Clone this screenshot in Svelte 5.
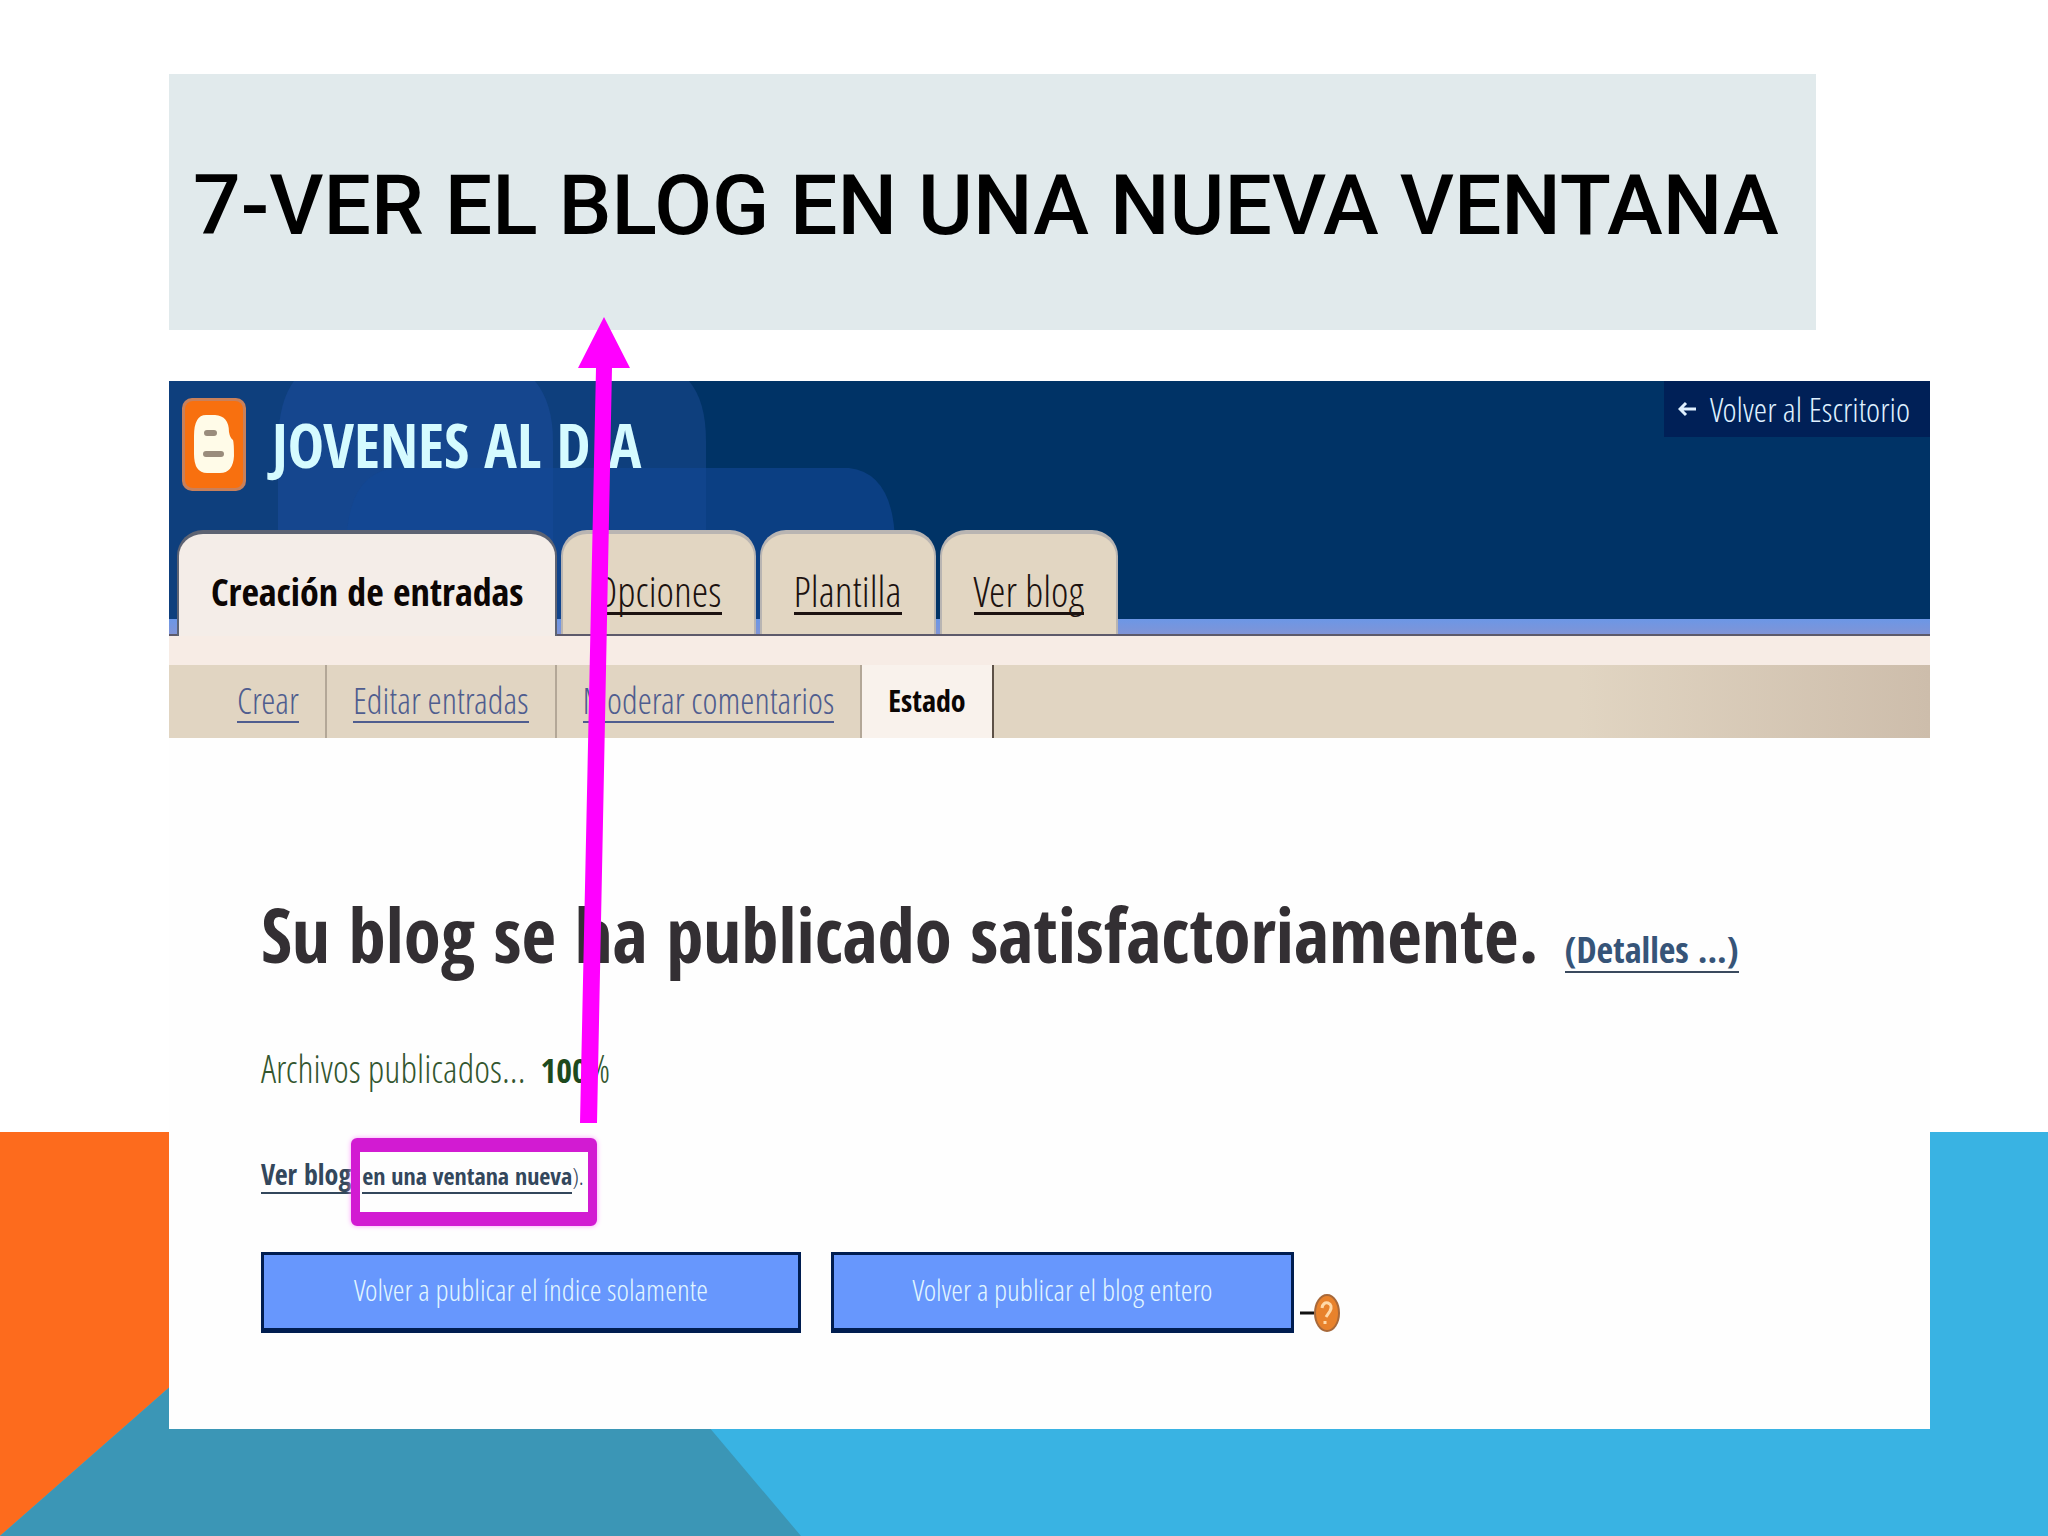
<script lang="ts">
  const tabs = ["Opciones", "Plantilla", "Ver blog"]
  const links = ["Crear", "Editar entradas", "Moderar comentarios"]
</script>

<main class="slide">
  <svg class="backdrop" viewBox="0 0 2048 404" preserveAspectRatio="none" aria-hidden="true">
    <rect width="2048" height="404" fill="#39b3e3" />
    <path d="M0 0H460L0 404Z" fill="#fd6b1d" />
    <path d="M0 404L460 0L801 404Z" fill="#3b96b6" />
  </svg>

  <div class="content">
    <h1 class="title">7-VER EL BLOG EN UNA NUEVA VENTANA</h1>

    <section class="window">
      <header class="head">
        <svg class="bubbles" width="740" height="253" viewBox="0 0 740 253" aria-hidden="true">
          <path d="M0 0H520Q537 20 537 60V253H0Z" fill="#0e3f7d" />
          <path d="M109 253V60Q110 20 125 0H366Q384 22 384 60V253Z" fill="#15468e" />
          <path d="M178 253V150Q184 88 230 87H680Q724 92 726 160V253Z" fill="#134796" opacity="0.6" />
        </svg>
        <div class="head-inner">
          <div class="brand-row">
            <svg class="logo" width="64" height="93" viewBox="0 0 64 93" role="img" aria-label="Blogger">
              <rect width="64" height="93" rx="10" fill="#c9805a" />
              <rect x="3" y="3" width="58" height="87" rx="8" fill="#f8700f" />
              <path d="M12 38Q12 17 24 17H33Q47 18 47 34Q48 40 51 42Q52 45 52 58Q51 75 38 75H25Q12 75 12 56Z" fill="#fffbe8" />
              <path d="M25 35H32M24 56H39" stroke="#9a8c7c" stroke-width="6" stroke-linecap="round" />
            </svg>
            <h2 class="blog-name">JOVENES AL DIA</h2>
            <a class="back" href="#escritorio">
              <svg width="18" height="16" viewBox="0 0 18 16" aria-hidden="true">
                <path d="M18 8H2M8 2L2 8L8 14" fill="none" stroke="#dff0ff" stroke-width="3" />
              </svg>
              Volver al Escritorio
            </a>
          </div>
          <nav class="tabs">
            <a class="tab current" href="#entradas">Creación de entradas</a>
            {#each tabs as tab}
              <a class="tab" href="#{tab}"><span>{tab}</span></a>
            {/each}
          </nav>
        </div>
      </header>

      <nav class="subnav">
        {#each links as link}
          <a class="sub" href="#{link}"><span>{link}</span></a>
        {/each}
        <a class="sub current" href="#estado">Estado</a>
      </nav>

      <div class="body">
        <div class="headline">
          <h3>Su blog se ha publicado satisfactoriamente.</h3>
          <a href="#detalles">(Detalles ...)</a>
        </div>
        <p class="progress">Archivos publicados... <b>100</b>%</p>
        <p class="view">
          <a class="view-link" href="#blog">Ver blog</a>
          <span class="marked"><a href="#ventana">en una ventana nueva</a>).</span>
        </p>
        <div class="actions">
          <button class="wide">Volver a publicar el índice solamente</button>
          <button>Volver a publicar el blog entero</button>
          <svg class="help" width="42" height="40" viewBox="0 0 42 40" role="img" aria-label="Ayuda">
            <path d="M0 20H14" stroke="#111" stroke-width="3" />
            <ellipse cx="27" cy="20" rx="12" ry="18" fill="#e8822c" stroke="#a8693a" stroke-width="2" />
            <path d="M22 15Q23 9 28 10Q33 12 30 18L26 24M25 28V31" fill="none" stroke="#ffd9a8" stroke-width="3" />
          </svg>
        </div>
      </div>
    </section>

    <svg class="arrow" width="52" height="806" viewBox="0 0 52 806" aria-hidden="true">
      <path d="M26 0L52 51H34L19 806H2L18 51H0Z" fill="#ff00ff" />
    </svg>
  </div>
</main>

<style>
  :global(body) {
    margin: 0;
    background: #fff;
  }
  .slide {
    --bold: "Open Sans Condensed", "Roboto Condensed", sans-serif;
    --light: "Open Sans Condensed Light", "Roboto Condensed", sans-serif;
    display: grid;
    grid-template-columns: minmax(0, 1fr);
    min-height: 100vh;
    font-family: var(--light);
  }
  .backdrop {
    grid-area: 1 / 1;
    align-self: end;
    width: 100%;
    height: 404px;
  }
  .content {
    grid-area: 1 / 1;
    position: relative;
    display: flex;
    flex-direction: column;
    gap: 51px;
    box-sizing: border-box;
    padding: 74px 118px 107px 169px;
  }
  .title {
    display: flex;
    align-items: center;
    box-sizing: border-box;
    height: 256px;
    margin: 0 114px 0 0;
    padding: 8px 24px 0;
    background: #e1eaec;
    color: #000;
    font: 500 84px/100px Roboto, sans-serif;
    white-space: nowrap;
  }
  .window {
    flex: 1;
    background: #fefefe;
  }
  .head {
    display: grid;
    background: #003366;
    border-bottom: 2px solid #5d5a6a;
  }
  .bubbles {
    grid-area: 1 / 1;
    align-self: end;
  }
  .head-inner {
    grid-area: 1 / 1;
    background: linear-gradient(#6c97e6, #8094d6) bottom / 100% 15px no-repeat;
  }
  .brand-row {
    display: flex;
    align-items: flex-start;
    height: 149px;
  }
  .logo {
    margin: 17px 26px 0 13px;
  }
  .blog-name {
    flex: 1;
    margin: 24px 0 0;
    color: #d5fbff;
    font-family: var(--bold);
    font-size: 61px;
    line-height: 80px;
  }
  .back {
    display: flex;
    align-items: center;
    gap: 14px;
    padding: 8px 20px 8px 14px;
    background: #002057;
    color: #dff0ff;
    font-size: 34px;
    line-height: 40px;
    text-decoration: none;
  }
  .tabs {
    display: flex;
    gap: 4px;
    height: 104px;
    padding-left: 8px;
  }
  .tab {
    box-sizing: border-box;
    padding: 36px 32px 0;
    border: solid #b9b5b2;
    border-width: 4px 2px 0;
    border-radius: 26px 26px 0 0;
    background: #e2d6c2;
    color: #1c1210;
    font-size: 42px;
    line-height: 42px;
    text-decoration: none;
  }
  .tab span,
  .sub span {
    display: block;
    border-bottom: 3px solid;
  }
  .tab.current {
    margin-bottom: -2px;
    border-color: #5d6373;
    background: #f4ede8;
    color: #0c0604;
    font-family: var(--bold);
    font-size: 38px;
    font-weight: 700;
  }
  .subnav {
    display: flex;
    height: 73px;
    padding-left: 42px;
    border-top: 29px solid #f7ece5;
    background: linear-gradient(90deg, #e1d5c2 80%, #cdbdab);
  }
  .sub {
    padding: 16px 26px 0;
    border-right: 2px solid #b3a797;
    color: #4f5d8f;
    font-size: 36px;
    line-height: 40px;
    text-decoration: none;
  }
  .sub span {
    border-bottom-width: 2px;
  }
  .sub.current {
    border-color: #5d5147;
    background: #f9f2ec;
    color: #0c0604;
    font-family: var(--bold);
    font-size: 30px;
    font-weight: 700;
  }
  .body {
    padding: 140px 92px 86px;
  }
  .headline {
    display: flex;
    align-items: baseline;
    gap: 26px;
    white-space: nowrap;
  }
  h3 {
    margin: 0;
    color: #332f33;
    font-family: var(--bold);
    font-size: 75px;
    line-height: 112px;
  }
  .headline a {
    border-bottom: 2px solid #3a4a5e;
    color: #365478;
    font-family: var(--bold);
    font-size: 36px;
    line-height: 42px;
    text-decoration: none;
  }
  .progress {
    margin: 54px 0 0;
    color: #33562f;
    font-size: 38px;
    line-height: 48px;
  }
  .progress b {
    margin-left: 8px;
    color: #1d4a1d;
    font-family: var(--bold);
    font-size: 34px;
  }
  .view {
    display: flex;
    align-items: flex-start;
    height: 88px;
    margin: 44px 0 26px;
  }
  .view a {
    border-bottom: 2px solid #33475c;
    color: #33475c;
    font-family: var(--bold);
    font-weight: 700;
    text-decoration: none;
  }
  .view-link {
    margin-top: 18px;
    font-size: 28px;
    line-height: 36px;
  }
  .marked {
    box-sizing: border-box;
    height: 88px;
    padding: 6px 4px 0 2px;
    border: solid #d21bd2;
    border-width: 14px 9px;
    border-radius: 6px;
    box-shadow: 0 0 5px #ff9cff;
    color: #33475c;
    font-size: 24px;
    line-height: 36px;
    white-space: nowrap;
  }
  .actions {
    display: flex;
    gap: 30px;
  }
  button {
    width: 463px;
    height: 81px;
    padding: 0 0 4px;
    border: solid #001d50;
    border-width: 3px 3px 5px;
    background: #6797fd;
    color: #e2f6ff;
    font-family: var(--light);
    font-size: 30px;
  }
  .wide {
    width: 540px;
  }
  .help {
    align-self: flex-end;
    margin-left: -24px;
  }
  .arrow {
    position: absolute;
    top: 317px;
    left: 578px;
  }
</style>
